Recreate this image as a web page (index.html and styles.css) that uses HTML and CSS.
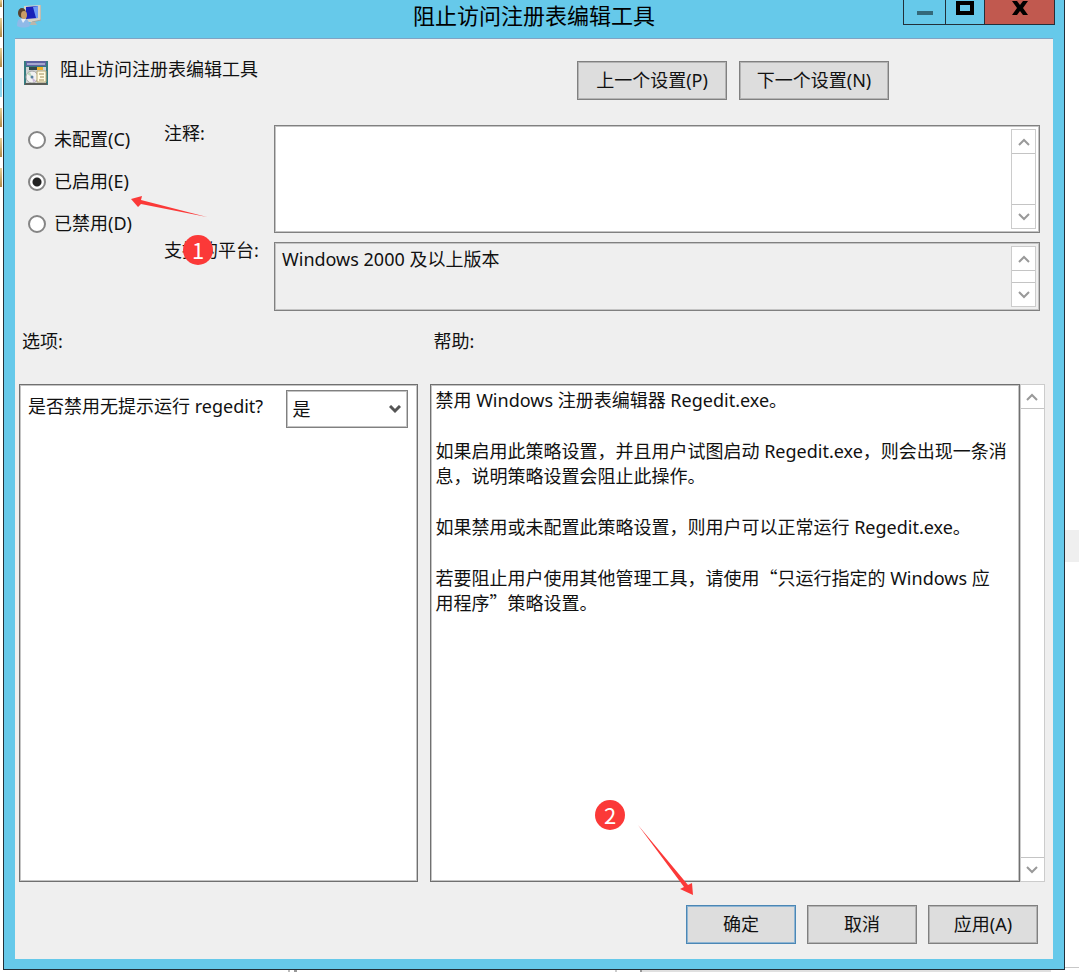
FILE: index.html
```html
<!DOCTYPE html>
<html lang="zh-CN">

<head>
    <meta charset="UTF-8">
    <meta name="viewport" content="width=device-width, initial-scale=1.0">
    <title>阻止访问注册表编辑工具</title>
    <link rel="stylesheet" href="styles.css">
</head>

<body>

    <!-- edge of the window behind -->
    <div class="behind-left">
        <i class="file first"></i>
        <i class="file"></i>
        <i class="file"></i>
        <i class="file blue"></i>
        <i class="file"></i>
        <i class="file"></i>
        <i class="file"></i>
    </div>

    <main class="window">
        <header class="titlebar">
            <svg class="app-icon" width="24" height="24" viewBox="0 0 24 24">
                <path d="M7 2l17-1v15l-9 2H7z" fill="#d5d2c8" />
                <path d="M24 1v15l-9 2" fill="none" stroke="#a9a79f" />
                <path d="M9 3l12-1v12l-12 1z" fill="#1820b8" />
                <path d="M16 3l5-1v12l-2 0z" fill="#6c98f6" />
                <path d="M14 18h4l2 3h-7z" fill="#b9b6ac" />
                <path d="M0 22c0-6 2-8 6-8s6 3 7 8c-4 2-9 2-13 0z" fill="#8fb9e8" />
                <path d="M4 15l2 4 3-4z" fill="#e8f0fa" />
                <ellipse cx="5" cy="9" rx="4" ry="5" fill="#59422f" />
                <ellipse cx="7" cy="11" rx="3" ry="4" fill="#c99d67" />
            </svg>
            <h1 class="title">阻止访问注册表编辑工具</h1>
            <div class="window-buttons">
                <button class="minimize" aria-label="最小化">
                    <svg width="16" height="4"><path d="M0 0h16v4H0z" fill="#34697a" /></svg>
                </button>
                <button class="maximize" aria-label="最大化">
                    <svg width="18" height="14"><path d="M2 2h14v10H2z" fill="none" stroke="#000" stroke-width="4" /></svg>
                </button>
                <button class="close" aria-label="关闭">
                    <svg width="16" height="14" viewBox="0 0 16 14"><path d="M0 0h5l3 4 3-4h5l-5 7 5 7h-5l-3-4-3 4H0l5-7z" fill="#000" /></svg>
                </button>
            </div>
        </header>

        <div class="client">
            <div class="setting-head">
                <svg class="setting-icon" width="24" height="24" viewBox="0 0 24 24">
                    <path d="M0 0h24v24H0z" fill="#367c80" />
                    <path d="M2 0h20v5H2z" fill="#5f63a2" />
                    <path d="M3 2h18v2H3z" fill="#a5a8ce" />
                    <path d="M2 6h20v16H2z" fill="#d0d4d3" />
                    <path d="M5 6h14v3H5z" fill="#33494b" />
                    <path d="M13 6h6v3h-6z" fill="#f0b32b" />
                    <circle cx="8" cy="16" r="6" fill="#f1f1f1" stroke="#a6a6a6" />
                    <path d="M8 16l-5-3 3-2z" fill="#bcd9bd" />
                    <path d="M8 16l4 4-3 1z" fill="#cbb8d9" />
                    <circle cx="8" cy="16" r="1.5" fill="#587f9d" />
                    <path d="M13 10h9v11h-9z" fill="#fffbe3" stroke="#b5a672" />
                    <path d="M15 13h5M16 16h4M15 19h5" stroke="#a08e58" />
                    <path d="M1 22h22v2H1z" fill="#5b5d58" />
                </svg>
                <h2 class="setting-name">阻止访问注册表编辑工具</h2>
                <div class="nav-buttons">
                    <button class="btn btn-nav">上一个设置(P)</button>
                    <button class="btn btn-nav">下一个设置(N)</button>
                </div>
            </div>

            <div class="state">
                <div class="radios">
                    <label class="radio"><input type="radio" name="state">未配置(C)</label>
                    <label class="radio"><input type="radio" name="state" checked>已启用(E)</label>
                    <label class="radio"><input type="radio" name="state">已禁用(D)</label>
                </div>

                <label class="field-label" for="comment">注释:</label>
                <div class="field">
                    <textarea id="comment"></textarea>
                    <div class="scrollbar">
                        <button aria-label="向上"><svg width="12" height="8"><path d="M1 7l5-5 5 5" /></svg></button>
                        <button aria-label="向下"><svg width="12" height="8"><path d="M1 1l5 5 5-5" /></svg></button>
                    </div>
                </div>

                <label class="field-label" for="platform">支持的平台:</label>
                <div class="field readonly">
                    <textarea id="platform" readonly>Windows 2000 及以上版本</textarea>
                    <div class="scrollbar">
                        <button aria-label="向上"><svg width="12" height="8"><path d="M1 7l5-5 5 5" /></svg></button>
                        <button aria-label="向下"><svg width="12" height="8"><path d="M1 1l5 5 5-5" /></svg></button>
                    </div>
                </div>

                <svg class="arrow arrow-one" width="78" height="22" viewBox="0 0 78 22">
                    <path d="M0 3L11 0l-1 4L76 21 10 8l-3 3z" fill="#fb3938" />
                </svg>
                <span class="step step-one">1</span>
            </div>

            <div class="panels">
                <h3 class="panel-title">选项:</h3>
                <h3 class="panel-title">帮助:</h3>

                <section class="options">
                    <label for="silent">是否禁用无提示运行 regedit?</label>
                    <div class="select">
                        <select id="silent">
                            <option>是</option>
                            <option>否</option>
                        </select>
                        <svg width="12" height="9"><path d="M1 1l5 5 5-5" /></svg>
                    </div>
                </section>

                <section class="help">
                    <div class="help-text">
                        <p>禁用 Windows 注册表编辑器 Regedit.exe。</p>
                        <p>如果启用此策略设置，并且用户试图启动 Regedit.exe，则会出现一条消息，说明策略设置会阻止此操作。</p>
                        <p>如果禁用或未配置此策略设置，则用户可以正常运行 Regedit.exe。</p>
                        <p>若要阻止用户使用其他管理工具，请使用<span class="quote">“</span>只运行指定的 Windows 应<br>用程序<span class="quote">”</span>策略设置。</p>
                    </div>
                    <div class="scrollbar">
                        <button aria-label="向上"><svg width="12" height="8"><path d="M1 7l5-5 5 5" /></svg></button>
                        <button aria-label="向下"><svg width="12" height="8"><path d="M1 1l5 5 5-5" /></svg></button>
                    </div>
                </section>
            </div>

            <footer class="actions">
                <button class="btn btn-default">确定</button>
                <button class="btn">取消</button>
                <button class="btn">应用(A)</button>

                <svg class="arrow arrow-two" width="56" height="70" viewBox="0 0 56 70">
                    <path d="M0 0L46 62l-4 2 13 6-1-12-4 2z" fill="#fb3938" />
                </svg>
                <span class="step step-two">2</span>
            </footer>
        </div>
    </main>

    <div class="behind-right">
        <i class="row"></i>
        <i class="line"></i>
    </div>
    <div class="behind-bottom"></div>

</body>

</html>
```
FILE: styles.css
```css
* {
    box-sizing: border-box;
}

body {
    margin: 0;
    min-height: 100vh;
    display: grid;
    grid-template-columns: 3px 1fr 14px;
    grid-template-rows: 1fr 2px;
    background: #fff;
    color: #111;
    font-family: "Noto Sans", "Noto Sans CJK SC", sans-serif;
    font-size: 18px;
    line-height: 25px;
}

h1,
h2,
h3,
p {
    margin: 0;
    font-weight: normal;
}

button,
select,
textarea {
    font: inherit;
    color: inherit;
    margin: 0;
    padding: 0;
    border: 0;
    border-radius: 0;
}

svg {
    display: block;
}

/* things behind the dialog */
.behind-left {
    display: flex;
    flex-direction: column;
    gap: 11px;
}

.file {
    width: 2px;
    height: 19px;
    background: linear-gradient(#e8cf96, #b08a45);
}

.file.first {
    height: 7px;
}

.file.blue {
    background: #8fd6ee;
}

.behind-right {
    display: flex;
    flex-direction: column;
    justify-content: space-between;
    padding: 530px 0 2px;
}

.row {
    height: 32px;
    background: #efefef;
}

.line {
    height: 1px;
    background: #c8c8c8;
}

.behind-bottom {
    grid-column: 1 / -1;
    background: linear-gradient(to right, #fff 288px, #bbb 288px 290px, #fff 290px 294px, #999 294px 297px, #fff 297px 615px, #ccc 615px 617px, #fff 617px 640px, #999 640px 642px, #e0e0e0 642px 1051px, #fff 1051px);
}

/* window frame */
.window {
    display: flex;
    flex-direction: column;
    padding: 0 11px 10px;
    border: 1px solid #22303a;
    border-top: 0;
    background: #66c9ea;
}

.titlebar {
    display: grid;
    grid-template-columns: 1fr auto 1fr;
    height: 38px;
}

.app-icon {
    margin: 4px 2px;
}

.title {
    font-size: 22px;
    line-height: 30px;
    color: #000;
}

.window-buttons {
    display: flex;
    justify-self: end;
    height: 25px;
    margin-right: -2px;
    border: 1px solid #22303a;
    border-top: 0;
}

.window-buttons button {
    display: flex;
    justify-content: center;
    background: transparent;
}

.window-buttons .minimize {
    width: 41px;
    padding-top: 11px;
}

.window-buttons .maximize {
    width: 39px;
    padding-top: 1px;
    border-left: 1px solid #22303a;
}

.window-buttons .close {
    width: 70px;
    padding-top: 1px;
    border-left: 1px solid #22303a;
    background: #c1594f;
}

.client {
    flex: 1;
    display: flex;
    flex-direction: column;
    border-top: 1px solid #7fa3c4;
    background: #efefef;
}

/* buttons */
.btn {
    width: 110px;
    height: 39px;
    border: 1px solid #808080;
    box-shadow: inset 0 0 0 1px #b4b4b4;
    background: #ddd;
}

.btn-nav {
    width: 150px;
}

.btn-default {
    border-color: #4b87b5;
    box-shadow: inset 0 0 0 1px #8fb5d3;
}

/* setting name and previous / next */
.setting-head {
    display: flex;
    padding: 22px 164px 0 9px;
}

.setting-icon {
    margin-right: 12px;
}

.setting-name {
    font-size: 18px;
    line-height: 16px;
}

.nav-buttons {
    display: flex;
    gap: 12px;
    margin-left: auto;
}

/* state, comment and platform */
.state {
    position: relative;
    display: grid;
    grid-template-columns: 140px 110px 1fr;
    grid-template-rows: 108px 69px;
    row-gap: 9px;
    padding: 25px 13px 0 9px;
}

.radios {
    grid-row: 1 / 3;
    display: flex;
    flex-direction: column;
    gap: 17px;
    padding: 2px 0 0 4px;
}

.radio {
    display: flex;
    align-items: center;
    gap: 8px;
    height: 25px;
}

.radio input {
    appearance: none;
    width: 18px;
    height: 18px;
    margin: 0;
    border: 2px solid #858585;
    border-radius: 50%;
    background: #fff;
}

.radio input:checked {
    background: radial-gradient(circle, #222 4px, #fff 5px);
}

.field-label {
    line-height: 16px;
}

.field {
    display: flex;
    padding: 3px;
    border: 1px solid #808080;
    box-shadow: inset 0 0 0 1px #c4c4c4;
    background: #fff;
}

.field.readonly {
    background: #efefef;
}

.field textarea {
    flex: 1;
    padding: 1px 4px;
    resize: none;
    outline: none;
    overflow: hidden;
    background: transparent;
}

.scrollbar {
    display: flex;
    flex-direction: column;
    justify-content: space-between;
    width: 25px;
    border: 1px solid #ccc;
    background: #fff;
}

.scrollbar button {
    display: flex;
    align-items: center;
    justify-content: center;
    height: 24px;
    background: #fff;
}

.scrollbar button:first-child {
    border-bottom: 1px solid #c4c4c4;
}

.scrollbar button:last-child {
    border-top: 1px solid #c4c4c4;
}

.scrollbar path {
    fill: none;
    stroke: #999;
    stroke-width: 2;
}

/* options and help */
.panels {
    flex: 1;
    display: grid;
    grid-template-columns: 13fr 20fr;
    grid-template-rows: 55px 1fr;
    column-gap: 12px;
    padding: 18px 8px 0 4px;
}

.panel-title {
    padding-left: 3px;
    font-size: 18px;
}

.options,
.help-text {
    border: 1px solid #707070;
    box-shadow: inset 0 0 0 1px #c4c4c4;
    background: #fff;
}

.options {
    display: flex;
    align-items: flex-start;
    justify-content: space-between;
    padding: 5px 9px 0 8px;
}

.options label {
    padding-top: 4px;
}

.select {
    display: grid;
    align-items: center;
    width: 122px;
}

.select select,
.select svg {
    grid-area: 1 / 1;
}

.select select {
    appearance: none;
    height: 38px;
    padding-left: 5px;
    border: 1px solid #808080;
    box-shadow: inset 0 0 0 1px #c4c4c4;
    background: #fff;
}

.select svg {
    justify-self: end;
    margin-right: 7px;
    fill: none;
    stroke: #555;
    stroke-width: 3;
    pointer-events: none;
}

.help {
    display: flex;
}

.help-text {
    flex: 1;
    display: flex;
    flex-direction: column;
    gap: 26px;
    padding: 3px 4px;
}

/* full width quotation marks */
.quote {
    font-family: "Noto Sans CJK SC", sans-serif;
    line-height: 1;
}

/* bottom buttons */
.actions {
    position: relative;
    display: flex;
    justify-content: flex-end;
    gap: 11px;
    padding: 23px 15px 15px;
}

/* red step marks over the dialog */
.step {
    position: absolute;
    width: 30px;
    height: 30px;
    border-radius: 50%;
    background: #fb3938;
    color: #fff;
    font-family: "Noto Sans CJK SC", sans-serif;
    font-size: 22px;
    line-height: 28px;
    text-align: center;
}

.arrow {
    position: absolute;
}

.step-one {
    top: 135px;
    left: 168px;
}

.arrow-one {
    top: 96px;
    left: 116px;
}

.step-two {
    right: 428px;
    bottom: 129px;
}

.arrow-two {
    right: 359px;
    bottom: 64px;
}
```
